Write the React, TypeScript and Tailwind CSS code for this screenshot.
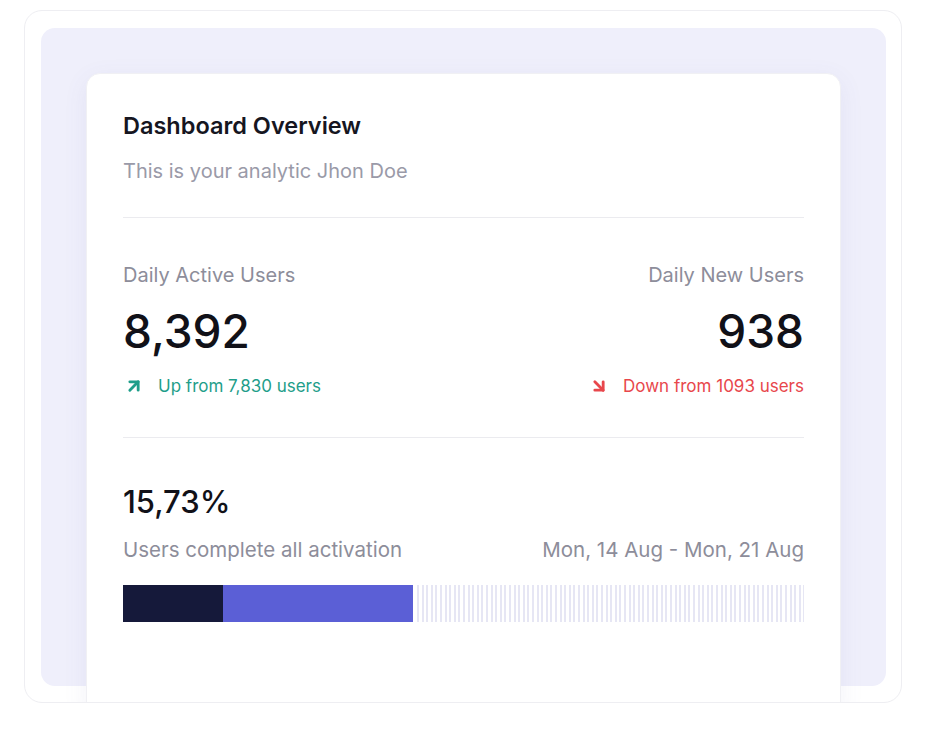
import React from "react";
import { ArrowUpRight, ArrowDownRight } from "lucide-react";

const font = { fontFamily: "Inter, 'Noto Sans', sans-serif" };

const StatBlock = ({
  label,
  value,
  trend,
  up,
  align,
}: {
  label: string;
  value: string;
  trend: string;
  up: boolean;
  align: "left" | "right";
}) => {
  const right = align === "right";
  return (
    <div className={`flex flex-col ${right ? "items-end" : "items-start"}`}>
      <span className="text-[20px] leading-[28px] text-[#8d8d9a]">{label}</span>
      <span className="mt-[18px] text-[46px] leading-[48px] font-medium text-[#111118]">
        {value}
      </span>
      <div
        className={`mt-[19px] flex items-center gap-[14px] text-[17px] leading-[24px] ${
          up ? "text-[#1f9e8a]" : "text-[#e8474c]"
        }`}
      >
        {up ? (
          <ArrowUpRight size={20} strokeWidth={3.4} className="ml-[1px]" />
        ) : (
          <ArrowDownRight size={20} strokeWidth={3.4} />
        )}
        <span>{trend}</span>
      </div>
    </div>
  );
};

export default function App() {
  return (
    <div className="bg-white min-h-[742px] pl-[24px] pt-[10px]" style={font}>
      <div className="w-[878px] h-[693px] rounded-[18px] border border-[#eeeef2] overflow-hidden pt-[17px] pl-[16px] bg-white">
        <div className="w-[845px] h-[658px] rounded-[14px] bg-[#efeffb] pt-[45px] px-[45px]">
          <div className="h-[640px] rounded-t-[14px] bg-white border border-[#f0f0f4] shadow-[0_6px_24px_rgba(90,90,170,0.08)] pt-[37px] px-[36px]">
            <h2 className="text-[23.5px] leading-[30px] font-semibold text-[#16161f]">
              Dashboard Overview
            </h2>
            <p className="mt-[16px] text-[20px] leading-[28px] text-[#9a9aa8]">
              This is your analytic Jhon Doe
            </p>
            <div className="mt-[32px] h-px bg-[#ebebef]" />

            <div className="mt-[43px] flex justify-between">
              <StatBlock
                label="Daily Active Users"
                value="8,392"
                trend="Up from 7,830 users"
                up
                align="left"
              />
              <StatBlock
                label="Daily New Users"
                value="938"
                trend="Down from 1093 users"
                up={false}
                align="right"
              />
            </div>

            <div className="mt-[39px] h-px bg-[#ebebef]" />

            <div className="mt-[44px] text-[31px] leading-[40px] font-medium text-[#111118]">
              15,73%
            </div>
            <div className="mt-[14px] flex justify-between text-[20.5px] leading-[28px] text-[#8d8d9a]">
              <span>Users complete all activation</span>
              <span>Mon, 14 Aug - Mon, 21 Aug</span>
            </div>

            <div className="mt-[21px] flex h-[37px]">
              <div className="w-[100px] bg-[#15193a]" />
              <div className="w-[190px] bg-[#5b5fd6]" />
              <div className="ml-[4px] flex-1 bg-[repeating-linear-gradient(90deg,#e6e6f4_0px,#e6e6f4_2px,transparent_2px,transparent_4.6px)]" />
            </div>
          </div>
        </div>
      </div>
    </div>
  );
}
